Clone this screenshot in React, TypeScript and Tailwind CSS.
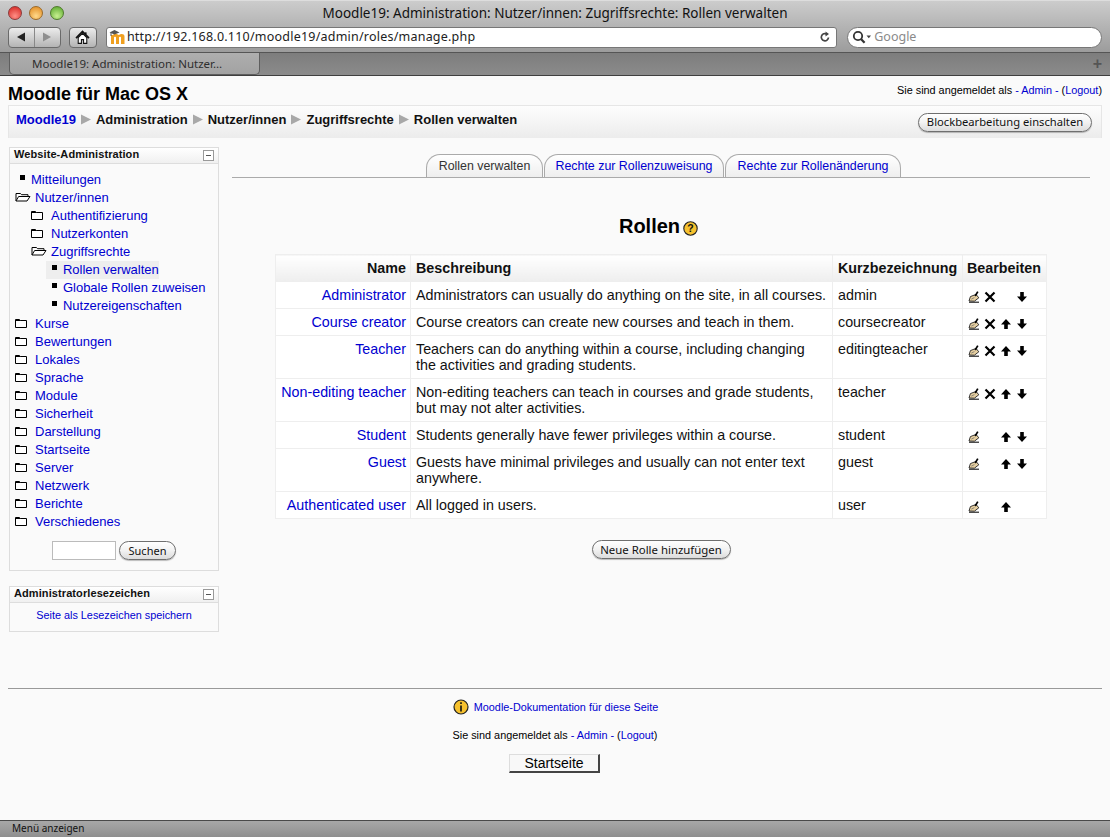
import React from "react";

const Sans = "font-['Liberation_Sans',Arial,sans-serif]";
const Ui = "font-['Noto_Sans',sans-serif]";
const link = "text-[#0000d0]";

function Pill({ children, className = "" }: { children: React.ReactNode; className?: string }) {
  return (
    <button className={`h-[19px] rounded-full border border-[#6f6f6f] bg-gradient-to-b from-white via-[#f2f2f2] to-[#dcdcdc] shadow-[0_1px_1px_rgba(0,0,0,0.25)] leading-none text-[#111] ${Ui} ${className}`}>
      {children}
    </button>
  );
}

function Folder({ open }: { open?: boolean }) {
  return open ? (
    <svg width="16" height="10" viewBox="0 0 16 10" className="shrink-0">
      <path d="M1 9V1.5h4.5l1 1.2H13v1.8" fill="#fff" stroke="#000" strokeWidth="1" />
      <path d="M1 9l2.6-4.5H15L12 9z" fill="#fff" stroke="#000" strokeWidth="1" />
    </svg>
  ) : (
    <svg width="12" height="10" viewBox="0 0 12 10" className="shrink-0">
      <path d="M.5 9.5v-8h4l1 1h6v7z" fill="#fff" stroke="#000" strokeWidth="1" />
      <path d="M.5 2.5h5" stroke="#000" strokeWidth="1" />
    </svg>
  );
}

function Bullet() {
  return <span className="block w-[5px] h-[5px] bg-black shrink-0" />;
}

function TreeRow({ kind, label, level = 0, active }: { kind: "open" | "closed" | "leaf"; label: string; level?: number; active?: boolean }) {
  const pad = level === 0 ? "pl-[5px]" : level === 1 ? "pl-[21px]" : "pl-[36px]";
  return (
    <div className={`flex items-center h-[18px] ${pad}`}>
      {kind === "leaf" ? (
        <div className={`flex items-center h-[18px] ${level === 0 ? "pl-[5px]" : "pl-[6px]"} ${active ? "bg-[#eeeeee]" : ""}`}>
          <span className="w-[7px] flex justify-start -mt-[5px]"><Bullet /></span>
          <a className={`ml-[4px] text-[13px] ${level === 2 ? "tracking-[-0.03px]" : ""} ${link}`}>{label}</a>
        </div>
      ) : (
        <>
          <span className="w-[16px] flex -mt-[3px]"><Folder open={kind === "open"} /></span>
          <a className={`ml-[4px] text-[13px] ${link}`}>{label}</a>
        </>
      )}
    </div>
  );
}

function Collapse() {
  return <span className="block w-[11px] h-[11px] border border-[#999] bg-white relative"><span className="absolute left-[2px] right-[2px] top-[4px] h-px bg-[#555]" /></span>;
}

function BlockHead({ title }: { title: string }) {
  return (
    <div className="flex items-center justify-between h-[16px] pl-[4px] pr-[4px] border-b border-[#dddddd] bg-gradient-to-b from-white to-[#f0f0f0]">
      <span className="text-[11px] font-bold tracking-[0.09px] text-[#111] -mt-[2px]">{title}</span>
      <Collapse />
    </div>
  );
}

function Pencil() {
  return (
    <svg width="12" height="12" viewBox="0 0 12 12">
      <path d="M1 11.2h10" stroke="#111" strokeWidth="1.1" />
      <path d="M1 10L2.4 5.6 8 3.4l2.8 3.4-4.4 3.4z" fill="#e6cfa0" stroke="#222" strokeWidth="0.9" />
      <path d="M7.2 5L9.8 0.6" stroke="#000" strokeWidth="1.7" />
      <path d="M3.2 8.2l3.2-1.6" stroke="#666" strokeWidth="0.7" />
    </svg>
  );
}
function Cross() {
  return (
    <svg width="12" height="12" viewBox="0 0 12 12">
      <path d="M1.5 1.5l9 9M10.5 1.5l-9 9" stroke="#000" strokeWidth="2.2" />
    </svg>
  );
}
function Arrow({ up }: { up?: boolean }) {
  return (
    <svg width="12" height="12" viewBox="0 0 12 12" className={up ? "" : "rotate-180"}>
      <path d="M6 1L1 6.4H4.2V11H7.8V6.4H11z" fill="#000" />
    </svg>
  );
}

function Edit({ x, up, down }: { x?: boolean; up?: boolean; down?: boolean }) {
  const cell = "w-[16px] h-[12px] flex";
  return (
    <div className="flex mt-[4px]">
      <span className={cell}><Pencil /></span>
      <span className={cell}>{x && <Cross />}</span>
      <span className={cell}>{up && <Arrow up />}</span>
      <span className={cell}>{down && <Arrow />}</span>
    </div>
  );
}

const rows = [
  { n: "Administrator", d: ["Administrators can usually do anything on the site, in all courses."], s: "admin", x: true, up: false, down: true },
  { n: "Course creator", d: ["Course creators can create new courses and teach in them."], s: "coursecreator", x: true, up: true, down: true },
  { n: "Teacher", d: ["Teachers can do anything within a course, including changing", "the activities and grading students."], s: "editingteacher", x: true, up: true, down: true },
  { n: "Non-editing teacher", d: ["Non-editing teachers can teach in courses and grade students,", "but may not alter activities."], s: "teacher", x: true, up: true, down: true },
  { n: "Student", d: ["Students generally have fewer privileges within a course."], s: "student", x: false, up: true, down: true },
  { n: "Guest", d: ["Guests have minimal privileges and usually can not enter text", "anywhere."], s: "guest", x: false, up: true, down: true },
  { n: "Authenticated user", d: ["All logged in users."], s: "user", x: false, up: true, down: false },
];

function Tab({ label, active, width }: { label: string; active?: boolean; width: string }) {
  return (
    <div className={`h-[23px] ${width} flex items-center justify-center rounded-t-[14px] border border-b-0 border-[#aaaaaa] bg-gradient-to-b from-white to-[#eeeeee] text-[12.4px] ${active ? "text-[#333]" : link}`}>
      {label}
    </div>
  );
}

const th = "h-[27px] pt-[2px] px-[5px] border border-[#eeeeee] bg-gradient-to-b from-white to-[#eeeeee] text-[14.3px] font-bold text-[#111] align-middle";
const td = "px-[5px] py-[5px] border border-[#eeeeee] bg-white text-[14.3px] leading-[16px] align-top text-[#111]";

export default function App() {
  return (
    <div className={`w-[1110px] h-[837px] flex flex-col overflow-hidden bg-[#fafafa] ${Sans}`}>
      {/* title bar + toolbar */}
      <div className="h-[53px] shrink-0 bg-gradient-to-b from-[#cccccc] to-[#9c9c9c] border-t border-[#dddddd] border-b border-b-[#555]">
        <div className="h-[24px] grid grid-cols-[1fr_auto_1fr] items-center">
          <div className="flex items-center gap-[7px] pl-[8px]">
            <span className="block w-[14px] h-[14px] rounded-full border border-[#8a3a3a] bg-[radial-gradient(circle_at_50%_75%,#ff8f86,#d4201c)]" />
            <span className="block w-[14px] h-[14px] rounded-full border border-[#9a6a2a] bg-[radial-gradient(circle_at_50%_75%,#ffd98a,#e0861a)]" />
            <span className="block w-[14px] h-[14px] rounded-full border border-[#4f7a2c] bg-[radial-gradient(circle_at_50%_75%,#c8f090,#54a528)]" />
          </div>
          <div className={`text-[13.5px] text-[#111] ${Ui}`}>Moodle19: Administration: Nutzer/innen: Zugriffsrechte: Rollen verwalten</div>
          <div />
        </div>
        <div className="flex items-center h-[22px] mt-[1px] pl-[8px] pr-[8px]">
          <div className="flex w-[53px] h-[21px] rounded-[4px] border border-[#6a6a6a] bg-gradient-to-b from-[#ececec] to-[#b4b4b4]">
            <span className="flex-1 flex items-center justify-center border-r border-[#888]">
              <svg width="10" height="10" viewBox="0 0 10 10"><path d="M9 0.5v9L1 5z" fill="#222" /></svg>
            </span>
            <span className="flex-1 flex items-center justify-center">
              <svg width="10" height="10" viewBox="0 0 10 10"><path d="M1 0.5v9L9 5z" fill="#8e8e8e" /></svg>
            </span>
          </div>
          <div className="ml-[8px] w-[28px] h-[21px] rounded-[4px] border border-[#6a6a6a] bg-gradient-to-b from-[#ececec] to-[#b4b4b4] flex items-center justify-center">
            <svg width="15" height="15" viewBox="0 0 14 14">
              <path d="M10 2.2v2" stroke="#111" strokeWidth="1.6" />
              <path d="M1 7.5L7 1.5l6 6" fill="none" stroke="#111" strokeWidth="1.7" />
              <path d="M3 7v5.5h3V9h2v3.5h3V7L7 3.2z" fill="#fff" stroke="#111" strokeWidth="1" />
            </svg>
          </div>
          <div className="ml-[9px] w-[732px] h-[21px] rounded-[3px] border border-[#777] bg-white flex items-center pl-[2px] pr-[5px]">
            <svg width="18" height="16" viewBox="0 0 18 16" className="shrink-0">
              <path d="M2 6v9h3V8.5c0-1 2-1 2 0V15h3V8.5c0-1 2-1 2 0V15h3.5V7.5c0-2.8-3.8-3-5.5-1.4C8.4 4.6 4.5 4.4 4 6z" fill="#f0a020" />
              <path d="M0.5 3.4L5.5 1l5 2.4L5.5 5.6z" fill="#555" />
              <path d="M2 4v3" stroke="#555" strokeWidth="1" />
            </svg>
            <span className={`text-[12.5px] text-[#222] ${Ui} tracking-[0.22px]`}>http://192.168.0.110/moodle19/admin/roles/manage.php</span>
            <svg width="12" height="12" viewBox="0 0 12 12" className="ml-auto">
              <path d="M9.5 6.5A3.6 3.6 0 1 1 7.6 3" fill="none" stroke="#444" strokeWidth="1.7" />
              <path d="M6.5 0.5L10 3 6.5 5.5z" fill="#444" />
            </svg>
          </div>
          <div className="ml-[10px] w-[255px] h-[21px] rounded-full border border-[#777] bg-white flex items-center pl-[4px]">
            <svg width="20" height="15" viewBox="0 0 20 15">
              <circle cx="6" cy="6" r="4.2" fill="none" stroke="#333" strokeWidth="1.8" />
              <path d="M9.2 9.2l3.4 3.6" stroke="#333" strokeWidth="2.2" />
              <path d="M14.5 5.5h4.5l-2.2 2.8z" fill="#444" />
            </svg>
            <span className={`ml-[2px] text-[12.5px] text-[#8a8a8a] ${Ui}`}>Google</span>
          </div>
        </div>
      </div>

      {/* tab bar */}
      <div className="h-[23px] shrink-0 bg-gradient-to-b from-[#7d7d7d] to-[#8b8b8b] border-b border-[#3f3f3f] flex items-stretch pl-[9px] pr-[8px]">
        <div className={`w-[251px] rounded-b-[5px] bg-gradient-to-b from-[#aeaeae] to-[#a2a2a2] border border-t-0 border-[#5e5e5e] pl-[22px] flex items-center text-[11.5px] text-[#2e2e2e] ${Ui}`}>
          Moodle19: Administration: Nutzer…
        </div>
        <span className="ml-auto flex items-center text-[16px] font-bold text-[#555]">+</span>
      </div>

      {/* page */}
      <div className="flex-1 min-h-0 flex flex-col px-[8px] text-[#111]">
        <div className="flex justify-between h-[29px] shrink-0">
          <h1 className="text-[18px] font-bold text-black leading-[21px] mt-[8px]">Moodle für Mac OS X</h1>
          <div className="text-[10.85px] leading-[13px] mt-[8px] text-black">
            Sie sind angemeldet als <span className={link}>- Admin -</span> (<span className={link}>Logout</span>)
          </div>
        </div>
        <div className="h-[33px] shrink-0 flex items-center justify-between border border-[#e6e6e6] border-b-0 bg-gradient-to-b from-[#fdfdfd] to-[#ececec] pl-[7px] pr-[9px]">
          <div className="flex items-center gap-[5px] text-[13px] font-bold text-[#111] -mt-[5px]">
            <a className={link}>Moodle19</a>
            {["Administration", "Nutzer/innen", "Zugriffsrechte", "Rollen verwalten"].map((t) => (
              <React.Fragment key={t}>
                <svg width="10" height="11" viewBox="0 0 10 11"><path d="M0 0.5v10l10-5z" fill="#a8a8a8" /></svg>
                <span>{t}</span>
              </React.Fragment>
            ))}
          </div>
          <Pill className="w-[174px] text-[11.2px]">Blockbearbeitung einschalten</Pill>
        </div>

        <div className="flex mt-[9px] flex-1 min-h-0">
          {/* sidebar */}
          <div className="w-[210px] ml-px shrink-0">
            <div className="border border-[#dddddd] h-[424px] bg-[#fafafa]">
              <BlockHead title="Website-Administration" />
              <div className="pt-[7px]">
                <TreeRow kind="leaf" label="Mitteilungen" />
                <TreeRow kind="open" label="Nutzer/innen" />
                <TreeRow kind="closed" label="Authentifizierung" level={1} />
                <TreeRow kind="closed" label="Nutzerkonten" level={1} />
                <TreeRow kind="open" label="Zugriffsrechte" level={1} />
                <TreeRow kind="leaf" label="Rollen verwalten" level={2} active />
                <TreeRow kind="leaf" label="Globale Rollen zuweisen" level={2} />
                <TreeRow kind="leaf" label="Nutzereigenschaften" level={2} />
                {["Kurse", "Bewertungen", "Lokales", "Sprache", "Module", "Sicherheit", "Darstellung", "Startseite", "Server", "Netzwerk", "Berichte", "Verschiedenes"].map((t) => (
                  <TreeRow key={t} kind="closed" label={t} />
                ))}
              </div>
              <div className="flex items-center justify-center gap-[3px] mt-[10px]">
                <span className="block w-[64px] h-[19px] border border-[#bbb] bg-white" />
                <Pill className="w-[57px] text-[11px]">Suchen</Pill>
              </div>
            </div>
            <div className="border border-[#dddddd] mt-[15px] h-[46px]">
              <BlockHead title="Administratorlesezeichen" />
              <div className={`text-center text-[10.85px] mt-[4px] ${link}`}>Seite als Lesezeichen speichern</div>
            </div>
          </div>

          {/* main */}
          <div className="ml-[13px] w-[858px] shrink-0 flex flex-col">
            <div className="h-[31px] shrink-0 flex items-end justify-center gap-[1px] border-b border-[#aaaaaa] pl-[5px]">
              <Tab label="Rollen verwalten" active width="w-[117px]" />
              <Tab label="Rechte zur Rollenzuweisung" width="w-[180px]" />
              <Tab label="Rechte zur Rollenänderung" width="w-[176px]" />
            </div>
            <div className="flex items-center justify-center mt-[36px] h-[23px] pr-[5px]">
              <h2 className="text-[20px] font-bold text-black">Rollen</h2>
              <svg width="15" height="15" viewBox="0 0 15 15" className="ml-[3px] mt-[5px]">
                <circle cx="7.5" cy="7.5" r="6.7" fill="#f6c12e" stroke="#222" strokeWidth="1.1" />
                <text x="7.5" y="11.3" textAnchor="middle" fontSize="10.5" fontWeight="bold" fill="#111" fontFamily="Liberation Sans">?</text>
              </svg>
            </div>
            <table className="mt-[17px] ml-[43px] w-[771px] table-fixed border-collapse">
              <colgroup>
                <col className="w-[135px]" />
                <col className="w-[422px]" />
                <col className="w-[130px]" />
                <col className="w-[84px]" />
              </colgroup>
              <thead>
                <tr>
                  <th className={`${th} text-right pr-[4px]`}>Name</th>
                  <th className={`${th} text-left`}>Beschreibung</th>
                  <th className={`${th} text-left`}>Kurzbezeichnung</th>
                  <th className={`${th} text-left pl-[4px] pr-0`}>Bearbeiten</th>
                </tr>
              </thead>
              <tbody>
                {rows.map((r) => (
                  <tr key={r.n}>
                    <td className={`${td} text-right whitespace-nowrap pr-[4px]`}><a className={link}>{r.n}</a></td>
                    <td className={td}>{r.d.map((l) => <div key={l} className="whitespace-nowrap">{l}</div>)}</td>
                    <td className={td}>{r.s}</td>
                    <td className={td}><Edit x={r.x} up={r.up} down={r.down} /></td>
                  </tr>
                ))}
              </tbody>
            </table>
            <div className="flex justify-center mt-[21px]">
              <Pill className="w-[139px] text-[11.4px]">Neue Rolle hinzufügen</Pill>
            </div>
          </div>
        </div>

        {/* footer */}
        <div className="h-[132px] shrink-0 border-t border-[#999] flex flex-col items-center">
          <div className="flex items-center mt-[9px] h-[18px] ml-[1px]">
            <svg width="16" height="16" viewBox="0 0 16 16">
              <circle cx="8" cy="8" r="7" fill="#f6c12e" stroke="#222" strokeWidth="1.2" />
              <path d="M8 3.2v1.8M8 6.5v6" stroke="#111" strokeWidth="1.6" />
            </svg>
            <a className={`ml-[5px] text-[10.85px] ${link}`}>Moodle-Dokumentation für diese Seite</a>
          </div>
          <div className="text-[10.85px] mt-[13px] leading-[13px] text-black">
            Sie sind angemeldet als <span className={link}>- Admin -</span> (<span className={link}>Logout</span>)
          </div>
          <button className="mt-[12px] -ml-[1px] w-[91px] h-[19px] bg-[#f8f8f8] border border-[#ddd] border-r-2 border-b-2 border-r-[#444] border-b-[#444] text-[14px] leading-none text-black">
            Startseite
          </button>
        </div>
      </div>

      {/* status bar */}
      <div className={`h-[17px] shrink-0 bg-gradient-to-b from-[#a8a8a8] to-[#8f8f8f] border-t border-[#4a4a4a] pl-[12px] text-[10px] leading-[15px] text-[#111] ${Ui}`}>
        Menü anzeigen
      </div>
    </div>
  );
}
